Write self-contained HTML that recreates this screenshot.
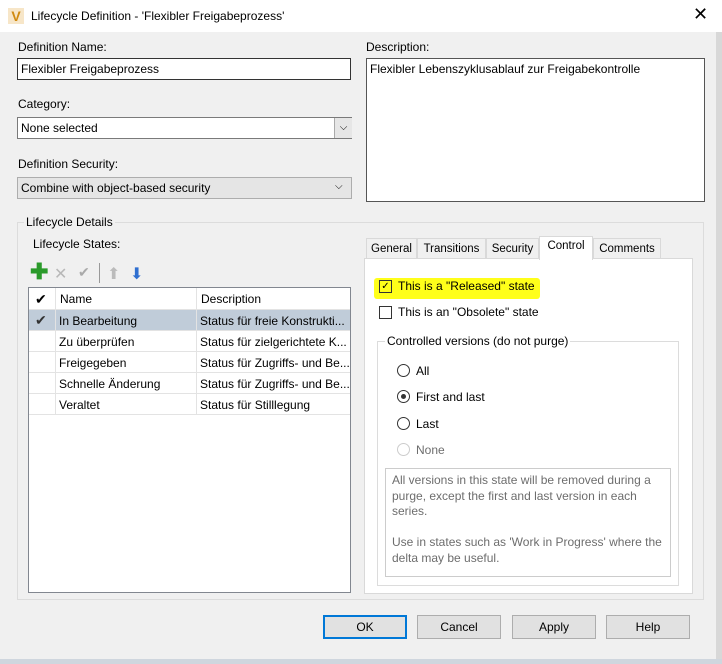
<!DOCTYPE html><html><head><style>
body{margin:0;width:722px;height:664px;position:relative;overflow:hidden;background:#f0f0f0;font-family:"Liberation Sans",sans-serif;font-size:12px;color:#000}
.a{position:absolute}
.lbl{position:absolute;white-space:nowrap}
.inp{position:absolute;background:#fff;border:1px solid #7a7a7a;box-sizing:border-box;padding:3px 3px;white-space:nowrap}
.btn{position:absolute;top:615px;width:84px;height:24px;box-sizing:border-box;background:#e1e1e1;border:1px solid #adadad;text-align:center;line-height:22px}
.row{position:absolute;left:29px;width:321px;height:21px;border-bottom:1px solid #e3e3e3;box-sizing:border-box}
.row span{position:absolute;top:4px;white-space:nowrap}
.rad{position:absolute;width:11px;height:11px;border:1px solid #333;border-radius:50%;background:#fff}
.tab{position:absolute;top:238px;height:20px;border:1px solid #d9d9d9;border-bottom:0;box-sizing:border-box;padding-top:4px;text-align:center;font-size:11.5px}
</style></head><body>
<div class="a" style="left:0;top:0;width:722px;height:32px;background:#fff"></div>
<div class="a" style="left:8px;top:8px;width:16px;height:16px;background:#f7e6c8;color:#d08a10;font-weight:bold;font-size:14px;text-align:center;line-height:16px">V</div>
<div class="lbl" style="left:31px;top:9px">Lifecycle Definition - 'Flexibler Freigabeprozess'</div>
<div class="lbl" style="left:693px;top:4px;font-size:18px">✕</div>
<div class="a" style="left:716px;top:32px;width:6px;height:632px;background:#d8d8d8"></div>
<div class="a" style="left:0;top:659px;width:722px;height:5px;background:#cfd6de"></div>

<div class="lbl" style="left:18px;top:40px">Definition Name:</div>
<div class="inp" style="left:17px;top:58px;width:334px;height:22px;border-color:#333">Flexibler Freigabeprozess</div>
<div class="lbl" style="left:18px;top:97px">Category:</div>
<div class="inp" style="left:17px;top:117px;width:335px;height:22px">None selected</div>
<div class="a" style="left:334px;top:118px;width:17px;height:20px;background:#e6e6e6;border-left:1px solid #aaa;text-align:center;font-size:10px;line-height:20px">⌵</div>
<div class="lbl" style="left:18px;top:157px">Definition Security:</div>
<div class="inp" style="left:17px;top:177px;width:335px;height:22px;background:#e5e5e5;border-color:#adadad">Combine with object-based security</div>
<div class="lbl" style="left:335px;top:181px;font-size:10px">⌵</div>

<div class="lbl" style="left:366px;top:40px">Description:</div>
<div class="inp" style="left:366px;top:58px;width:339px;height:144px;border-color:#555">Flexibler Lebenszyklusablauf zur Freigabekontrolle</div>

<div class="a" style="left:17px;top:222px;width:687px;height:378px;border:1px solid #dcdcdc;box-sizing:border-box"></div>
<div class="lbl" style="left:24px;top:215px;background:#f0f0f0;padding:0 2px">Lifecycle Details</div>
<div class="lbl" style="left:33px;top:237px">Lifecycle States:</div>
<div class="lbl" style="left:30px;top:260px;color:#2a9a2a;font-size:22px;font-weight:bold;line-height:24px">✚</div>
<div class="lbl" style="left:54px;top:264px;color:#b8b8b8;font-size:16px">✕</div>
<div class="lbl" style="left:78px;top:264px;color:#aaa;font-size:14px">✔</div>
<div class="a" style="left:99px;top:263px;width:1px;height:20px;background:#999"></div>
<div class="lbl" style="left:107px;top:264px;color:#bbb;font-size:16px">⬆</div>
<div class="lbl" style="left:130px;top:264px;color:#2f6fd0;font-size:16px">⬇</div>

<div class="a" style="left:28px;top:287px;width:323px;height:306px;background:#fff;border:1px solid #828790;box-sizing:border-box"></div>
<div class="row" style="top:288px;height:22px"><span style="left:6px;top:3px;font-size:14px">✔</span><span style="left:31px">Name</span><span style="left:172px">Description</span></div>
<div class="row" style="top:310px;background:#c0ccd9"><span style="left:6px;top:2px;font-size:14px;color:#333">✔</span><span style="left:30px">In Bearbeitung</span><span style="left:171px">Status für freie Konstrukti...</span></div>
<div class="row" style="top:331px"><span style="left:30px">Zu überprüfen</span><span style="left:171px">Status für zielgerichtete K...</span></div>
<div class="row" style="top:352px"><span style="left:30px">Freigegeben</span><span style="left:171px">Status für Zugriffs- und Be...</span></div>
<div class="row" style="top:373px"><span style="left:30px">Schnelle Änderung</span><span style="left:171px">Status für Zugriffs- und Be...</span></div>
<div class="row" style="top:394px"><span style="left:30px">Veraltet</span><span style="left:171px">Status für Stilllegung</span></div>
<div class="a" style="left:55px;top:288px;width:1px;height:127px;background:#e3e3e3"></div>
<div class="a" style="left:196px;top:288px;width:1px;height:127px;background:#e3e3e3"></div>

<div class="a" style="left:364px;top:258px;width:329px;height:336px;background:#fff;border:1px solid #d9d9d9;box-sizing:border-box"></div>
<div class="tab" style="left:366px;width:51px">General</div>
<div class="tab" style="left:417px;width:69px">Transitions</div>
<div class="tab" style="left:486px;width:53px">Security</div>
<div class="tab" style="left:539px;top:236px;width:54px;height:24px;background:#fff;padding-top:3px">Control</div>
<div class="tab" style="left:593px;width:68px">Comments</div>

<div class="a" style="left:374px;top:278px;width:166px;height:21px;background:#ffff1a;border-radius:3px"></div>
<div class="a" style="left:379px;top:280px;width:11px;height:11px;border:1px solid #333;font-size:10px;line-height:11px;text-align:center">✓</div>
<div class="lbl" style="left:398px;top:279px">This is a "Released" state</div>
<div class="a" style="left:379px;top:306px;width:11px;height:11px;border:1px solid #333;background:#fff"></div>
<div class="lbl" style="left:398px;top:305px">This is an "Obsolete" state</div>

<div class="a" style="left:377px;top:341px;width:302px;height:245px;border:1px solid #dcdcdc;box-sizing:border-box"></div>
<div class="lbl" style="left:385px;top:334px;background:#fff;padding:0 2px">Controlled versions (do not purge)</div>
<div class="rad" style="left:397px;top:364px"></div><div class="lbl" style="left:416px;top:364px">All</div>
<div class="rad" style="left:397px;top:390px"></div><div class="a" style="left:401px;top:394px;width:5px;height:5px;border-radius:50%;background:#333"></div><div class="lbl" style="left:416px;top:390px">First and last</div>
<div class="rad" style="left:397px;top:417px"></div><div class="lbl" style="left:416px;top:417px">Last</div>
<div class="rad" style="left:397px;top:443px;border-color:#ccc"></div><div class="lbl" style="left:416px;top:443px;color:#6d6d6d">None</div>
<div class="a" style="left:385px;top:468px;width:286px;height:109px;border:1px solid #ccc;box-sizing:border-box;padding:4px 6px;color:#6d6d6d;font-size:12px;line-height:15.5px">All versions in this state will be removed during a<br>purge, except the first and last version in each<br>series.<br><br>Use in states such as 'Work in Progress' where the<br>delta may be useful.</div>

<div class="btn" style="left:323px;border:2px solid #0078d7;line-height:20px">OK</div>
<div class="btn" style="left:417px">Cancel</div>
<div class="btn" style="left:512px">Apply</div>
<div class="btn" style="left:606px">Help</div>
</body></html>
